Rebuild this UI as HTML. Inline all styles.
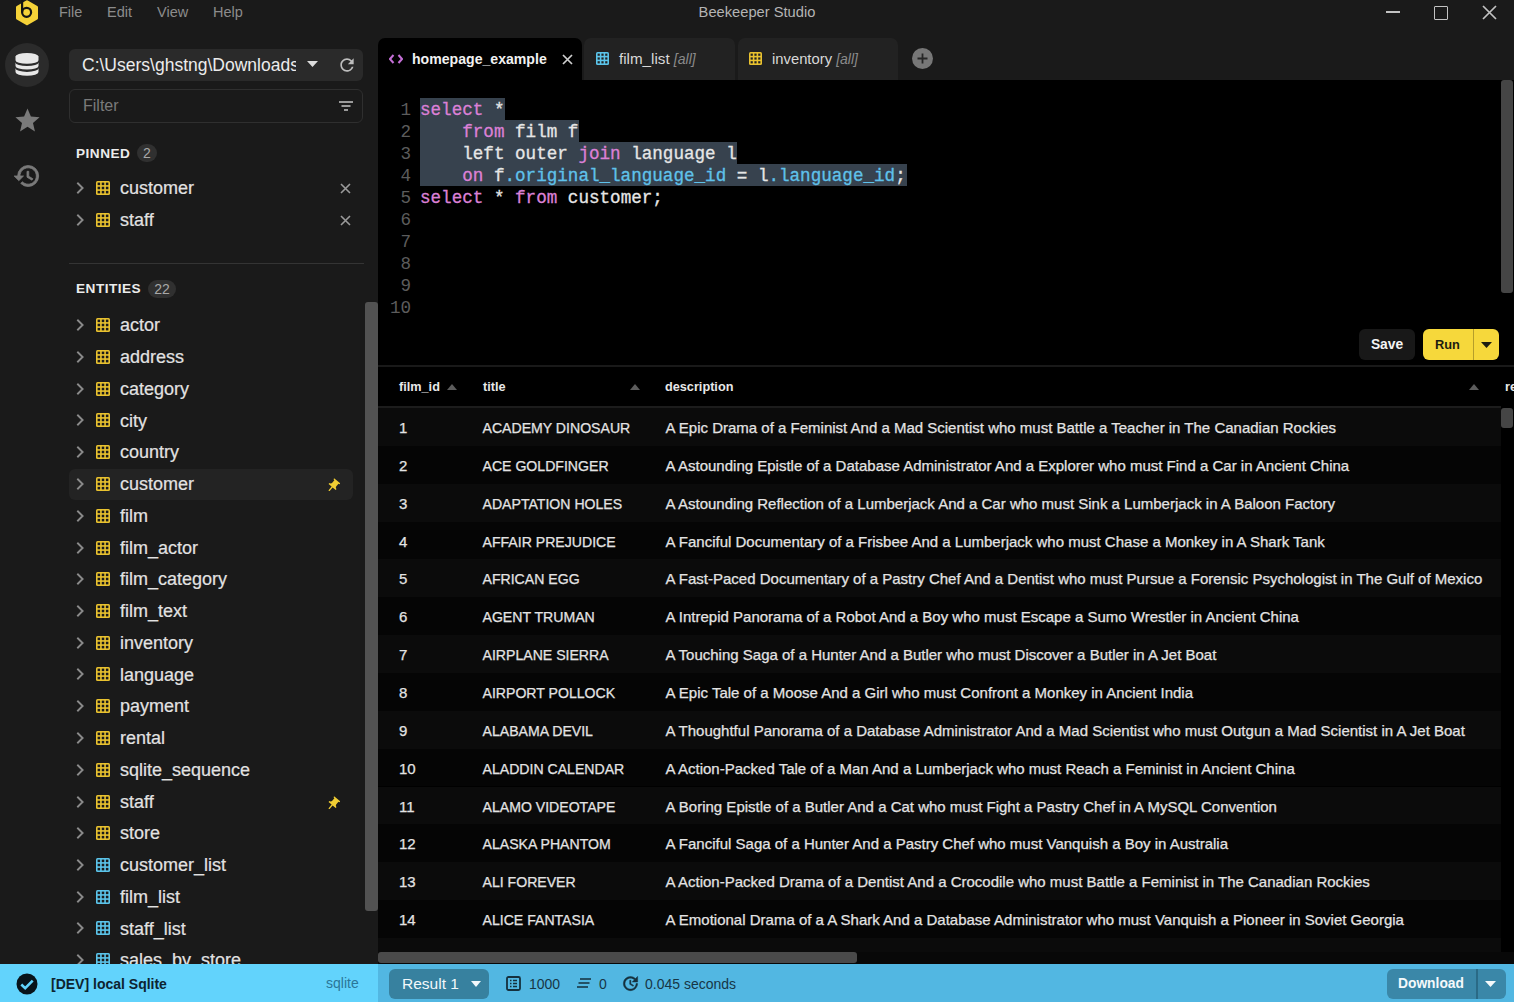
<!DOCTYPE html>
<html><head><meta charset="utf-8">
<style>
*{box-sizing:border-box;margin:0;padding:0}
html,body{width:1514px;height:1002px;overflow:hidden;background:#1a1a1a;font-family:"Liberation Sans",sans-serif;color:#ddd}
.abs{position:absolute}
.t{position:absolute;white-space:nowrap}
.menu{font-size:14.5px;color:#8c8c8c;line-height:20px;top:2px}
.item{font-size:18px;color:#e2e2e2;line-height:24px;-webkit-text-stroke:0.2px #e2e2e2}
.hdr{font-size:13.6px;font-weight:bold;color:#ececec;letter-spacing:0.5px;line-height:20px}
.badge{position:absolute;background:#303030;border-radius:9px;color:#a8a8a8;font-size:14px;text-align:center;line-height:18px;height:18px}
.code{font-family:"Liberation Mono",monospace;font-size:17.6px;line-height:22px;white-space:pre;color:#e6e6e6;-webkit-text-stroke:0.3px currentColor}
.ln{font-family:"Liberation Mono",monospace;font-size:17.6px;line-height:22px;color:#5c5c5c;text-align:right;width:30px}
.kw{color:#dc80d6}
.bl{color:#5fc1ea}
.sel{position:absolute;background:#37424e}
.cell{font-size:15px;color:#e3e3e3;line-height:20px;-webkit-text-stroke:0.25px #e3e3e3}
.th{font-size:12.7px;font-weight:bold;color:#e8e8e8;line-height:20px}
.tab{position:absolute;top:38px;height:42px;background:#222;border-radius:7px 7px 0 0}
.sb{font-size:14px;color:#173646;line-height:20px}
</style></head><body>

<svg class="abs" style="left:15px;top:0px" width="24" height="26" viewBox="0 0 24 26">
<path d="M12 1.8 L21.5 7.3 L21.5 18.3 L12 23.8 L2.5 18.3 L2.5 7.3 Z" fill="#f5d238" stroke="#f5d238" stroke-width="3" stroke-linejoin="round"/>
<path d="M7.1 0 L7.1 12.3" stroke="#141414" stroke-width="2.2"/>
<circle cx="11.6" cy="12.3" r="4.5" fill="none" stroke="#141414" stroke-width="2.2"/>
</svg>
<div class="t menu" style="left:59px">File</div>
<div class="t menu" style="left:107px">Edit</div>
<div class="t menu" style="left:157px">View</div>
<div class="t menu" style="left:213px">Help</div>
<div class="t" style="left:0;top:2px;width:1514px;text-align:center;font-size:14.7px;line-height:20px;color:#b4b4b4">Beekeeper Studio</div>
<div class="abs" style="left:1386px;top:11px;width:14px;height:2px;background:#c2c2c2"></div>
<div class="abs" style="left:1434px;top:6px;width:14px;height:14px;border:1.6px solid #c2c2c2;border-radius:1px"></div>
<svg class="abs" style="left:1482px;top:5px" width="15" height="15" viewBox="0 0 15 15"><path d="M1 1 L14 14 M14 1 L1 14" stroke="#c2c2c2" stroke-width="1.7"/></svg>
<div class="abs" style="left:5px;top:43px;width:44px;height:44px;border-radius:22px;background:#2b2b2b"></div>
<svg class="abs" style="left:15px;top:53px" width="24" height="23" viewBox="0 0 24 23">
<ellipse cx="12" cy="3.6" rx="11.5" ry="3.6" fill="#e8e8e8"/>
<path d="M0.5 3.6 L0.5 7.2 A11.5 3.6 0 0 0 23.5 7.2 L23.5 3.6 Z" fill="#e8e8e8"/>
<path d="M0.5 9.5 L0.5 13 A11.5 3.6 0 0 0 23.5 13 L23.5 9.5 A11.5 3.6 0 0 1 0.5 9.5 Z" fill="#e8e8e8"/>
<path d="M0.5 15.3 L0.5 19 A11.5 3.8 0 0 0 23.5 19 L23.5 15.3 A11.5 3.6 0 0 1 0.5 15.3 Z" fill="#e8e8e8"/>
</svg>
<svg class="abs" style="left:13px;top:106px" width="29" height="29" viewBox="0 0 24 24"><path d="M12 17.27L18.18 21l-1.64-7.03L22 9.24l-7.19-.61L12 2 9.19 8.63 2 9.24l5.46 4.73L5.82 21z" fill="#7a7a7a"/></svg>
<svg class="abs" style="left:13px;top:162px" width="28" height="28" viewBox="0 0 24 24"><path d="M13 3a9 9 0 0 0-9 9H1l3.89 3.89.07.14L9 12H6c0-3.87 3.13-7 7-7s7 3.13 7 7-3.13 7-7 7c-1.93 0-3.68-.79-4.94-2.06l-1.42 1.42A8.954 8.954 0 0 0 13 21a9 9 0 0 0 0-18zm-1 5v5l4.28 2.54.72-1.21-3.5-2.08V8H12z" fill="#7a7a7a" stroke="#7a7a7a" stroke-width="0.7"/></svg>
<div class="abs" style="left:69px;top:49px;width:294px;height:32px;background:#2a2a2a;border-radius:6px"></div>
<div class="t" style="left:82px;top:53px;width:214px;overflow:hidden;font-size:17.5px;line-height:24px;color:#ececec">C:\Users\ghstng\Downloads\</div>
<svg class="abs" style="left:307px;top:61px" width="11" height="6" viewBox="0 0 11 6"><path d="M0 0 L11 0 L5.5 6 Z" fill="#dcdcdc"/></svg>
<svg class="abs" style="left:337px;top:55px" width="20" height="20" viewBox="0 0 24 24"><path d="M17.65 6.35A7.958 7.958 0 0 0 12 4c-4.42 0-7.99 3.58-7.99 8s3.57 8 7.99 8c3.73 0 6.84-2.55 7.73-6h-2.08A5.99 5.99 0 0 1 12 18c-3.31 0-6-2.69-6-6s2.69-6 6-6c1.66 0 3.14.69 4.22 1.78L13 11h7V4l-2.35 2.35z" fill="#bdbdbd"/></svg>
<div class="abs" style="left:69px;top:89px;width:294px;height:34px;border:1px solid #2f2f2f;border-radius:6px;background:#1a1a1a"></div>
<div class="t" style="left:83px;top:96px;font-size:16px;line-height:20px;color:#7a7a7a">Filter</div>
<svg class="abs" style="left:338px;top:99px" width="16" height="14" viewBox="0 0 16 14"><path d="M1 3 H15 M3.5 7 H12.5 M6 11 H10" stroke="#9a9a9a" stroke-width="1.8"/></svg>
<div class="t hdr" style="left:76px;top:143.5px">PINNED</div>
<div class="badge" style="left:137px;top:144px;width:20px">2</div>
<svg class="abs" style="left:76px;top:182px" width="8" height="12" viewBox="0 0 8 12"><path d="M1.3 0.8 L6.6 6 L1.3 11.2" stroke="#8a8a8a" stroke-width="1.9" fill="none"/></svg>
<svg class="abs" style="left:96px;top:181px" width="14" height="14" viewBox="0 0 14 14"><rect x="0" y="0" width="14" height="14" rx="1.5" fill="#e9c22f"/><rect x="1.60" y="1.60" width="2.53" height="2.53" fill="#1a1a1a"/><rect x="1.60" y="5.73" width="2.53" height="2.53" fill="#1a1a1a"/><rect x="1.60" y="9.87" width="2.53" height="2.53" fill="#1a1a1a"/><rect x="5.73" y="1.60" width="2.53" height="2.53" fill="#1a1a1a"/><rect x="5.73" y="5.73" width="2.53" height="2.53" fill="#1a1a1a"/><rect x="5.73" y="9.87" width="2.53" height="2.53" fill="#1a1a1a"/><rect x="9.87" y="1.60" width="2.53" height="2.53" fill="#1a1a1a"/><rect x="9.87" y="5.73" width="2.53" height="2.53" fill="#1a1a1a"/><rect x="9.87" y="9.87" width="2.53" height="2.53" fill="#1a1a1a"/></svg>
<div class="t item" style="left:120px;top:176px">customer</div>
<svg class="abs" style="left:340px;top:183px" width="11" height="11" viewBox="0 0 11 11"><path d="M1 1 L10 10 M10 1 L1 10" stroke="#9a9a9a" stroke-width="1.6"/></svg>
<svg class="abs" style="left:76px;top:214px" width="8" height="12" viewBox="0 0 8 12"><path d="M1.3 0.8 L6.6 6 L1.3 11.2" stroke="#8a8a8a" stroke-width="1.9" fill="none"/></svg>
<svg class="abs" style="left:96px;top:213px" width="14" height="14" viewBox="0 0 14 14"><rect x="0" y="0" width="14" height="14" rx="1.5" fill="#e9c22f"/><rect x="1.60" y="1.60" width="2.53" height="2.53" fill="#1a1a1a"/><rect x="1.60" y="5.73" width="2.53" height="2.53" fill="#1a1a1a"/><rect x="1.60" y="9.87" width="2.53" height="2.53" fill="#1a1a1a"/><rect x="5.73" y="1.60" width="2.53" height="2.53" fill="#1a1a1a"/><rect x="5.73" y="5.73" width="2.53" height="2.53" fill="#1a1a1a"/><rect x="5.73" y="9.87" width="2.53" height="2.53" fill="#1a1a1a"/><rect x="9.87" y="1.60" width="2.53" height="2.53" fill="#1a1a1a"/><rect x="9.87" y="5.73" width="2.53" height="2.53" fill="#1a1a1a"/><rect x="9.87" y="9.87" width="2.53" height="2.53" fill="#1a1a1a"/></svg>
<div class="t item" style="left:120px;top:207.5px">staff</div>
<svg class="abs" style="left:340px;top:215px" width="11" height="11" viewBox="0 0 11 11"><path d="M1 1 L10 10 M10 1 L1 10" stroke="#9a9a9a" stroke-width="1.6"/></svg>
<div class="abs" style="left:69px;top:263px;width:295px;height:1px;background:#343434"></div>
<div class="t hdr" style="left:76px;top:279px">ENTITIES</div>
<div class="badge" style="left:148px;top:280px;width:28px">22</div>
<div class="abs" style="left:69px;top:469px;width:284px;height:31px;background:#232323;border-radius:6px"></div>
<svg class="abs" style="left:76px;top:319px" width="8" height="12" viewBox="0 0 8 12"><path d="M1.3 0.8 L6.6 6 L1.3 11.2" stroke="#8a8a8a" stroke-width="1.9" fill="none"/></svg>
<svg class="abs" style="left:96px;top:318px" width="14" height="14" viewBox="0 0 14 14"><rect x="0" y="0" width="14" height="14" rx="1.5" fill="#e9c22f"/><rect x="1.60" y="1.60" width="2.53" height="2.53" fill="#1a1a1a"/><rect x="1.60" y="5.73" width="2.53" height="2.53" fill="#1a1a1a"/><rect x="1.60" y="9.87" width="2.53" height="2.53" fill="#1a1a1a"/><rect x="5.73" y="1.60" width="2.53" height="2.53" fill="#1a1a1a"/><rect x="5.73" y="5.73" width="2.53" height="2.53" fill="#1a1a1a"/><rect x="5.73" y="9.87" width="2.53" height="2.53" fill="#1a1a1a"/><rect x="9.87" y="1.60" width="2.53" height="2.53" fill="#1a1a1a"/><rect x="9.87" y="5.73" width="2.53" height="2.53" fill="#1a1a1a"/><rect x="9.87" y="9.87" width="2.53" height="2.53" fill="#1a1a1a"/></svg>
<div class="t item" style="left:120px;top:313.25px">actor</div>
<svg class="abs" style="left:76px;top:351px" width="8" height="12" viewBox="0 0 8 12"><path d="M1.3 0.8 L6.6 6 L1.3 11.2" stroke="#8a8a8a" stroke-width="1.9" fill="none"/></svg>
<svg class="abs" style="left:96px;top:350px" width="14" height="14" viewBox="0 0 14 14"><rect x="0" y="0" width="14" height="14" rx="1.5" fill="#e9c22f"/><rect x="1.60" y="1.60" width="2.53" height="2.53" fill="#1a1a1a"/><rect x="1.60" y="5.73" width="2.53" height="2.53" fill="#1a1a1a"/><rect x="1.60" y="9.87" width="2.53" height="2.53" fill="#1a1a1a"/><rect x="5.73" y="1.60" width="2.53" height="2.53" fill="#1a1a1a"/><rect x="5.73" y="5.73" width="2.53" height="2.53" fill="#1a1a1a"/><rect x="5.73" y="9.87" width="2.53" height="2.53" fill="#1a1a1a"/><rect x="9.87" y="1.60" width="2.53" height="2.53" fill="#1a1a1a"/><rect x="9.87" y="5.73" width="2.53" height="2.53" fill="#1a1a1a"/><rect x="9.87" y="9.87" width="2.53" height="2.53" fill="#1a1a1a"/></svg>
<div class="t item" style="left:120px;top:345.00px">address</div>
<svg class="abs" style="left:76px;top:383px" width="8" height="12" viewBox="0 0 8 12"><path d="M1.3 0.8 L6.6 6 L1.3 11.2" stroke="#8a8a8a" stroke-width="1.9" fill="none"/></svg>
<svg class="abs" style="left:96px;top:382px" width="14" height="14" viewBox="0 0 14 14"><rect x="0" y="0" width="14" height="14" rx="1.5" fill="#e9c22f"/><rect x="1.60" y="1.60" width="2.53" height="2.53" fill="#1a1a1a"/><rect x="1.60" y="5.73" width="2.53" height="2.53" fill="#1a1a1a"/><rect x="1.60" y="9.87" width="2.53" height="2.53" fill="#1a1a1a"/><rect x="5.73" y="1.60" width="2.53" height="2.53" fill="#1a1a1a"/><rect x="5.73" y="5.73" width="2.53" height="2.53" fill="#1a1a1a"/><rect x="5.73" y="9.87" width="2.53" height="2.53" fill="#1a1a1a"/><rect x="9.87" y="1.60" width="2.53" height="2.53" fill="#1a1a1a"/><rect x="9.87" y="5.73" width="2.53" height="2.53" fill="#1a1a1a"/><rect x="9.87" y="9.87" width="2.53" height="2.53" fill="#1a1a1a"/></svg>
<div class="t item" style="left:120px;top:376.75px">category</div>
<svg class="abs" style="left:76px;top:414px" width="8" height="12" viewBox="0 0 8 12"><path d="M1.3 0.8 L6.6 6 L1.3 11.2" stroke="#8a8a8a" stroke-width="1.9" fill="none"/></svg>
<svg class="abs" style="left:96px;top:413px" width="14" height="14" viewBox="0 0 14 14"><rect x="0" y="0" width="14" height="14" rx="1.5" fill="#e9c22f"/><rect x="1.60" y="1.60" width="2.53" height="2.53" fill="#1a1a1a"/><rect x="1.60" y="5.73" width="2.53" height="2.53" fill="#1a1a1a"/><rect x="1.60" y="9.87" width="2.53" height="2.53" fill="#1a1a1a"/><rect x="5.73" y="1.60" width="2.53" height="2.53" fill="#1a1a1a"/><rect x="5.73" y="5.73" width="2.53" height="2.53" fill="#1a1a1a"/><rect x="5.73" y="9.87" width="2.53" height="2.53" fill="#1a1a1a"/><rect x="9.87" y="1.60" width="2.53" height="2.53" fill="#1a1a1a"/><rect x="9.87" y="5.73" width="2.53" height="2.53" fill="#1a1a1a"/><rect x="9.87" y="9.87" width="2.53" height="2.53" fill="#1a1a1a"/></svg>
<div class="t item" style="left:120px;top:408.50px">city</div>
<svg class="abs" style="left:76px;top:446px" width="8" height="12" viewBox="0 0 8 12"><path d="M1.3 0.8 L6.6 6 L1.3 11.2" stroke="#8a8a8a" stroke-width="1.9" fill="none"/></svg>
<svg class="abs" style="left:96px;top:445px" width="14" height="14" viewBox="0 0 14 14"><rect x="0" y="0" width="14" height="14" rx="1.5" fill="#e9c22f"/><rect x="1.60" y="1.60" width="2.53" height="2.53" fill="#1a1a1a"/><rect x="1.60" y="5.73" width="2.53" height="2.53" fill="#1a1a1a"/><rect x="1.60" y="9.87" width="2.53" height="2.53" fill="#1a1a1a"/><rect x="5.73" y="1.60" width="2.53" height="2.53" fill="#1a1a1a"/><rect x="5.73" y="5.73" width="2.53" height="2.53" fill="#1a1a1a"/><rect x="5.73" y="9.87" width="2.53" height="2.53" fill="#1a1a1a"/><rect x="9.87" y="1.60" width="2.53" height="2.53" fill="#1a1a1a"/><rect x="9.87" y="5.73" width="2.53" height="2.53" fill="#1a1a1a"/><rect x="9.87" y="9.87" width="2.53" height="2.53" fill="#1a1a1a"/></svg>
<div class="t item" style="left:120px;top:440.25px">country</div>
<svg class="abs" style="left:76px;top:478px" width="8" height="12" viewBox="0 0 8 12"><path d="M1.3 0.8 L6.6 6 L1.3 11.2" stroke="#8a8a8a" stroke-width="1.9" fill="none"/></svg>
<svg class="abs" style="left:96px;top:477px" width="14" height="14" viewBox="0 0 14 14"><rect x="0" y="0" width="14" height="14" rx="1.5" fill="#e9c22f"/><rect x="1.60" y="1.60" width="2.53" height="2.53" fill="#1a1a1a"/><rect x="1.60" y="5.73" width="2.53" height="2.53" fill="#1a1a1a"/><rect x="1.60" y="9.87" width="2.53" height="2.53" fill="#1a1a1a"/><rect x="5.73" y="1.60" width="2.53" height="2.53" fill="#1a1a1a"/><rect x="5.73" y="5.73" width="2.53" height="2.53" fill="#1a1a1a"/><rect x="5.73" y="9.87" width="2.53" height="2.53" fill="#1a1a1a"/><rect x="9.87" y="1.60" width="2.53" height="2.53" fill="#1a1a1a"/><rect x="9.87" y="5.73" width="2.53" height="2.53" fill="#1a1a1a"/><rect x="9.87" y="9.87" width="2.53" height="2.53" fill="#1a1a1a"/></svg>
<div class="t item" style="left:120px;top:472.00px">customer</div>
<svg class="abs" style="left:325px;top:477.5px" width="16" height="16" viewBox="0 0 24 24"><path d="M16 9V4h1c.55 0 1-.45 1-1s-.45-1-1-1H7c-.55 0-1 .45-1 1s.45 1 1 1h1v5c0 1.66-1.34 3-3 3v2h5.97v7l1 1 1-1v-7H19v-2c-1.66 0-3-1.34-3-3z" fill="#f0cd33" transform="rotate(40 12 12)"/></svg>
<svg class="abs" style="left:76px;top:510px" width="8" height="12" viewBox="0 0 8 12"><path d="M1.3 0.8 L6.6 6 L1.3 11.2" stroke="#8a8a8a" stroke-width="1.9" fill="none"/></svg>
<svg class="abs" style="left:96px;top:509px" width="14" height="14" viewBox="0 0 14 14"><rect x="0" y="0" width="14" height="14" rx="1.5" fill="#e9c22f"/><rect x="1.60" y="1.60" width="2.53" height="2.53" fill="#1a1a1a"/><rect x="1.60" y="5.73" width="2.53" height="2.53" fill="#1a1a1a"/><rect x="1.60" y="9.87" width="2.53" height="2.53" fill="#1a1a1a"/><rect x="5.73" y="1.60" width="2.53" height="2.53" fill="#1a1a1a"/><rect x="5.73" y="5.73" width="2.53" height="2.53" fill="#1a1a1a"/><rect x="5.73" y="9.87" width="2.53" height="2.53" fill="#1a1a1a"/><rect x="9.87" y="1.60" width="2.53" height="2.53" fill="#1a1a1a"/><rect x="9.87" y="5.73" width="2.53" height="2.53" fill="#1a1a1a"/><rect x="9.87" y="9.87" width="2.53" height="2.53" fill="#1a1a1a"/></svg>
<div class="t item" style="left:120px;top:503.75px">film</div>
<svg class="abs" style="left:76px;top:542px" width="8" height="12" viewBox="0 0 8 12"><path d="M1.3 0.8 L6.6 6 L1.3 11.2" stroke="#8a8a8a" stroke-width="1.9" fill="none"/></svg>
<svg class="abs" style="left:96px;top:541px" width="14" height="14" viewBox="0 0 14 14"><rect x="0" y="0" width="14" height="14" rx="1.5" fill="#e9c22f"/><rect x="1.60" y="1.60" width="2.53" height="2.53" fill="#1a1a1a"/><rect x="1.60" y="5.73" width="2.53" height="2.53" fill="#1a1a1a"/><rect x="1.60" y="9.87" width="2.53" height="2.53" fill="#1a1a1a"/><rect x="5.73" y="1.60" width="2.53" height="2.53" fill="#1a1a1a"/><rect x="5.73" y="5.73" width="2.53" height="2.53" fill="#1a1a1a"/><rect x="5.73" y="9.87" width="2.53" height="2.53" fill="#1a1a1a"/><rect x="9.87" y="1.60" width="2.53" height="2.53" fill="#1a1a1a"/><rect x="9.87" y="5.73" width="2.53" height="2.53" fill="#1a1a1a"/><rect x="9.87" y="9.87" width="2.53" height="2.53" fill="#1a1a1a"/></svg>
<div class="t item" style="left:120px;top:535.50px">film_actor</div>
<svg class="abs" style="left:76px;top:573px" width="8" height="12" viewBox="0 0 8 12"><path d="M1.3 0.8 L6.6 6 L1.3 11.2" stroke="#8a8a8a" stroke-width="1.9" fill="none"/></svg>
<svg class="abs" style="left:96px;top:572px" width="14" height="14" viewBox="0 0 14 14"><rect x="0" y="0" width="14" height="14" rx="1.5" fill="#e9c22f"/><rect x="1.60" y="1.60" width="2.53" height="2.53" fill="#1a1a1a"/><rect x="1.60" y="5.73" width="2.53" height="2.53" fill="#1a1a1a"/><rect x="1.60" y="9.87" width="2.53" height="2.53" fill="#1a1a1a"/><rect x="5.73" y="1.60" width="2.53" height="2.53" fill="#1a1a1a"/><rect x="5.73" y="5.73" width="2.53" height="2.53" fill="#1a1a1a"/><rect x="5.73" y="9.87" width="2.53" height="2.53" fill="#1a1a1a"/><rect x="9.87" y="1.60" width="2.53" height="2.53" fill="#1a1a1a"/><rect x="9.87" y="5.73" width="2.53" height="2.53" fill="#1a1a1a"/><rect x="9.87" y="9.87" width="2.53" height="2.53" fill="#1a1a1a"/></svg>
<div class="t item" style="left:120px;top:567.25px">film_category</div>
<svg class="abs" style="left:76px;top:605px" width="8" height="12" viewBox="0 0 8 12"><path d="M1.3 0.8 L6.6 6 L1.3 11.2" stroke="#8a8a8a" stroke-width="1.9" fill="none"/></svg>
<svg class="abs" style="left:96px;top:604px" width="14" height="14" viewBox="0 0 14 14"><rect x="0" y="0" width="14" height="14" rx="1.5" fill="#e9c22f"/><rect x="1.60" y="1.60" width="2.53" height="2.53" fill="#1a1a1a"/><rect x="1.60" y="5.73" width="2.53" height="2.53" fill="#1a1a1a"/><rect x="1.60" y="9.87" width="2.53" height="2.53" fill="#1a1a1a"/><rect x="5.73" y="1.60" width="2.53" height="2.53" fill="#1a1a1a"/><rect x="5.73" y="5.73" width="2.53" height="2.53" fill="#1a1a1a"/><rect x="5.73" y="9.87" width="2.53" height="2.53" fill="#1a1a1a"/><rect x="9.87" y="1.60" width="2.53" height="2.53" fill="#1a1a1a"/><rect x="9.87" y="5.73" width="2.53" height="2.53" fill="#1a1a1a"/><rect x="9.87" y="9.87" width="2.53" height="2.53" fill="#1a1a1a"/></svg>
<div class="t item" style="left:120px;top:599.00px">film_text</div>
<svg class="abs" style="left:76px;top:637px" width="8" height="12" viewBox="0 0 8 12"><path d="M1.3 0.8 L6.6 6 L1.3 11.2" stroke="#8a8a8a" stroke-width="1.9" fill="none"/></svg>
<svg class="abs" style="left:96px;top:636px" width="14" height="14" viewBox="0 0 14 14"><rect x="0" y="0" width="14" height="14" rx="1.5" fill="#e9c22f"/><rect x="1.60" y="1.60" width="2.53" height="2.53" fill="#1a1a1a"/><rect x="1.60" y="5.73" width="2.53" height="2.53" fill="#1a1a1a"/><rect x="1.60" y="9.87" width="2.53" height="2.53" fill="#1a1a1a"/><rect x="5.73" y="1.60" width="2.53" height="2.53" fill="#1a1a1a"/><rect x="5.73" y="5.73" width="2.53" height="2.53" fill="#1a1a1a"/><rect x="5.73" y="9.87" width="2.53" height="2.53" fill="#1a1a1a"/><rect x="9.87" y="1.60" width="2.53" height="2.53" fill="#1a1a1a"/><rect x="9.87" y="5.73" width="2.53" height="2.53" fill="#1a1a1a"/><rect x="9.87" y="9.87" width="2.53" height="2.53" fill="#1a1a1a"/></svg>
<div class="t item" style="left:120px;top:630.75px">inventory</div>
<svg class="abs" style="left:76px;top:668px" width="8" height="12" viewBox="0 0 8 12"><path d="M1.3 0.8 L6.6 6 L1.3 11.2" stroke="#8a8a8a" stroke-width="1.9" fill="none"/></svg>
<svg class="abs" style="left:96px;top:667px" width="14" height="14" viewBox="0 0 14 14"><rect x="0" y="0" width="14" height="14" rx="1.5" fill="#e9c22f"/><rect x="1.60" y="1.60" width="2.53" height="2.53" fill="#1a1a1a"/><rect x="1.60" y="5.73" width="2.53" height="2.53" fill="#1a1a1a"/><rect x="1.60" y="9.87" width="2.53" height="2.53" fill="#1a1a1a"/><rect x="5.73" y="1.60" width="2.53" height="2.53" fill="#1a1a1a"/><rect x="5.73" y="5.73" width="2.53" height="2.53" fill="#1a1a1a"/><rect x="5.73" y="9.87" width="2.53" height="2.53" fill="#1a1a1a"/><rect x="9.87" y="1.60" width="2.53" height="2.53" fill="#1a1a1a"/><rect x="9.87" y="5.73" width="2.53" height="2.53" fill="#1a1a1a"/><rect x="9.87" y="9.87" width="2.53" height="2.53" fill="#1a1a1a"/></svg>
<div class="t item" style="left:120px;top:662.50px">language</div>
<svg class="abs" style="left:76px;top:700px" width="8" height="12" viewBox="0 0 8 12"><path d="M1.3 0.8 L6.6 6 L1.3 11.2" stroke="#8a8a8a" stroke-width="1.9" fill="none"/></svg>
<svg class="abs" style="left:96px;top:699px" width="14" height="14" viewBox="0 0 14 14"><rect x="0" y="0" width="14" height="14" rx="1.5" fill="#e9c22f"/><rect x="1.60" y="1.60" width="2.53" height="2.53" fill="#1a1a1a"/><rect x="1.60" y="5.73" width="2.53" height="2.53" fill="#1a1a1a"/><rect x="1.60" y="9.87" width="2.53" height="2.53" fill="#1a1a1a"/><rect x="5.73" y="1.60" width="2.53" height="2.53" fill="#1a1a1a"/><rect x="5.73" y="5.73" width="2.53" height="2.53" fill="#1a1a1a"/><rect x="5.73" y="9.87" width="2.53" height="2.53" fill="#1a1a1a"/><rect x="9.87" y="1.60" width="2.53" height="2.53" fill="#1a1a1a"/><rect x="9.87" y="5.73" width="2.53" height="2.53" fill="#1a1a1a"/><rect x="9.87" y="9.87" width="2.53" height="2.53" fill="#1a1a1a"/></svg>
<div class="t item" style="left:120px;top:694.25px">payment</div>
<svg class="abs" style="left:76px;top:732px" width="8" height="12" viewBox="0 0 8 12"><path d="M1.3 0.8 L6.6 6 L1.3 11.2" stroke="#8a8a8a" stroke-width="1.9" fill="none"/></svg>
<svg class="abs" style="left:96px;top:731px" width="14" height="14" viewBox="0 0 14 14"><rect x="0" y="0" width="14" height="14" rx="1.5" fill="#e9c22f"/><rect x="1.60" y="1.60" width="2.53" height="2.53" fill="#1a1a1a"/><rect x="1.60" y="5.73" width="2.53" height="2.53" fill="#1a1a1a"/><rect x="1.60" y="9.87" width="2.53" height="2.53" fill="#1a1a1a"/><rect x="5.73" y="1.60" width="2.53" height="2.53" fill="#1a1a1a"/><rect x="5.73" y="5.73" width="2.53" height="2.53" fill="#1a1a1a"/><rect x="5.73" y="9.87" width="2.53" height="2.53" fill="#1a1a1a"/><rect x="9.87" y="1.60" width="2.53" height="2.53" fill="#1a1a1a"/><rect x="9.87" y="5.73" width="2.53" height="2.53" fill="#1a1a1a"/><rect x="9.87" y="9.87" width="2.53" height="2.53" fill="#1a1a1a"/></svg>
<div class="t item" style="left:120px;top:726.00px">rental</div>
<svg class="abs" style="left:76px;top:764px" width="8" height="12" viewBox="0 0 8 12"><path d="M1.3 0.8 L6.6 6 L1.3 11.2" stroke="#8a8a8a" stroke-width="1.9" fill="none"/></svg>
<svg class="abs" style="left:96px;top:763px" width="14" height="14" viewBox="0 0 14 14"><rect x="0" y="0" width="14" height="14" rx="1.5" fill="#e9c22f"/><rect x="1.60" y="1.60" width="2.53" height="2.53" fill="#1a1a1a"/><rect x="1.60" y="5.73" width="2.53" height="2.53" fill="#1a1a1a"/><rect x="1.60" y="9.87" width="2.53" height="2.53" fill="#1a1a1a"/><rect x="5.73" y="1.60" width="2.53" height="2.53" fill="#1a1a1a"/><rect x="5.73" y="5.73" width="2.53" height="2.53" fill="#1a1a1a"/><rect x="5.73" y="9.87" width="2.53" height="2.53" fill="#1a1a1a"/><rect x="9.87" y="1.60" width="2.53" height="2.53" fill="#1a1a1a"/><rect x="9.87" y="5.73" width="2.53" height="2.53" fill="#1a1a1a"/><rect x="9.87" y="9.87" width="2.53" height="2.53" fill="#1a1a1a"/></svg>
<div class="t item" style="left:120px;top:757.75px">sqlite_sequence</div>
<svg class="abs" style="left:76px;top:796px" width="8" height="12" viewBox="0 0 8 12"><path d="M1.3 0.8 L6.6 6 L1.3 11.2" stroke="#8a8a8a" stroke-width="1.9" fill="none"/></svg>
<svg class="abs" style="left:96px;top:795px" width="14" height="14" viewBox="0 0 14 14"><rect x="0" y="0" width="14" height="14" rx="1.5" fill="#e9c22f"/><rect x="1.60" y="1.60" width="2.53" height="2.53" fill="#1a1a1a"/><rect x="1.60" y="5.73" width="2.53" height="2.53" fill="#1a1a1a"/><rect x="1.60" y="9.87" width="2.53" height="2.53" fill="#1a1a1a"/><rect x="5.73" y="1.60" width="2.53" height="2.53" fill="#1a1a1a"/><rect x="5.73" y="5.73" width="2.53" height="2.53" fill="#1a1a1a"/><rect x="5.73" y="9.87" width="2.53" height="2.53" fill="#1a1a1a"/><rect x="9.87" y="1.60" width="2.53" height="2.53" fill="#1a1a1a"/><rect x="9.87" y="5.73" width="2.53" height="2.53" fill="#1a1a1a"/><rect x="9.87" y="9.87" width="2.53" height="2.53" fill="#1a1a1a"/></svg>
<div class="t item" style="left:120px;top:789.50px">staff</div>
<svg class="abs" style="left:325px;top:795.5px" width="16" height="16" viewBox="0 0 24 24"><path d="M16 9V4h1c.55 0 1-.45 1-1s-.45-1-1-1H7c-.55 0-1 .45-1 1s.45 1 1 1h1v5c0 1.66-1.34 3-3 3v2h5.97v7l1 1 1-1v-7H19v-2c-1.66 0-3-1.34-3-3z" fill="#f0cd33" transform="rotate(40 12 12)"/></svg>
<svg class="abs" style="left:76px;top:827px" width="8" height="12" viewBox="0 0 8 12"><path d="M1.3 0.8 L6.6 6 L1.3 11.2" stroke="#8a8a8a" stroke-width="1.9" fill="none"/></svg>
<svg class="abs" style="left:96px;top:826px" width="14" height="14" viewBox="0 0 14 14"><rect x="0" y="0" width="14" height="14" rx="1.5" fill="#e9c22f"/><rect x="1.60" y="1.60" width="2.53" height="2.53" fill="#1a1a1a"/><rect x="1.60" y="5.73" width="2.53" height="2.53" fill="#1a1a1a"/><rect x="1.60" y="9.87" width="2.53" height="2.53" fill="#1a1a1a"/><rect x="5.73" y="1.60" width="2.53" height="2.53" fill="#1a1a1a"/><rect x="5.73" y="5.73" width="2.53" height="2.53" fill="#1a1a1a"/><rect x="5.73" y="9.87" width="2.53" height="2.53" fill="#1a1a1a"/><rect x="9.87" y="1.60" width="2.53" height="2.53" fill="#1a1a1a"/><rect x="9.87" y="5.73" width="2.53" height="2.53" fill="#1a1a1a"/><rect x="9.87" y="9.87" width="2.53" height="2.53" fill="#1a1a1a"/></svg>
<div class="t item" style="left:120px;top:821.25px">store</div>
<svg class="abs" style="left:76px;top:859px" width="8" height="12" viewBox="0 0 8 12"><path d="M1.3 0.8 L6.6 6 L1.3 11.2" stroke="#8a8a8a" stroke-width="1.9" fill="none"/></svg>
<svg class="abs" style="left:96px;top:858px" width="14" height="14" viewBox="0 0 14 14"><rect x="0" y="0" width="14" height="14" rx="1.5" fill="#5bc4ea"/><rect x="1.60" y="1.60" width="2.53" height="2.53" fill="#1a1a1a"/><rect x="1.60" y="5.73" width="2.53" height="2.53" fill="#1a1a1a"/><rect x="1.60" y="9.87" width="2.53" height="2.53" fill="#1a1a1a"/><rect x="5.73" y="1.60" width="2.53" height="2.53" fill="#1a1a1a"/><rect x="5.73" y="5.73" width="2.53" height="2.53" fill="#1a1a1a"/><rect x="5.73" y="9.87" width="2.53" height="2.53" fill="#1a1a1a"/><rect x="9.87" y="1.60" width="2.53" height="2.53" fill="#1a1a1a"/><rect x="9.87" y="5.73" width="2.53" height="2.53" fill="#1a1a1a"/><rect x="9.87" y="9.87" width="2.53" height="2.53" fill="#1a1a1a"/></svg>
<div class="t item" style="left:120px;top:853.00px">customer_list</div>
<svg class="abs" style="left:76px;top:891px" width="8" height="12" viewBox="0 0 8 12"><path d="M1.3 0.8 L6.6 6 L1.3 11.2" stroke="#8a8a8a" stroke-width="1.9" fill="none"/></svg>
<svg class="abs" style="left:96px;top:890px" width="14" height="14" viewBox="0 0 14 14"><rect x="0" y="0" width="14" height="14" rx="1.5" fill="#5bc4ea"/><rect x="1.60" y="1.60" width="2.53" height="2.53" fill="#1a1a1a"/><rect x="1.60" y="5.73" width="2.53" height="2.53" fill="#1a1a1a"/><rect x="1.60" y="9.87" width="2.53" height="2.53" fill="#1a1a1a"/><rect x="5.73" y="1.60" width="2.53" height="2.53" fill="#1a1a1a"/><rect x="5.73" y="5.73" width="2.53" height="2.53" fill="#1a1a1a"/><rect x="5.73" y="9.87" width="2.53" height="2.53" fill="#1a1a1a"/><rect x="9.87" y="1.60" width="2.53" height="2.53" fill="#1a1a1a"/><rect x="9.87" y="5.73" width="2.53" height="2.53" fill="#1a1a1a"/><rect x="9.87" y="9.87" width="2.53" height="2.53" fill="#1a1a1a"/></svg>
<div class="t item" style="left:120px;top:884.75px">film_list</div>
<svg class="abs" style="left:76px;top:922px" width="8" height="12" viewBox="0 0 8 12"><path d="M1.3 0.8 L6.6 6 L1.3 11.2" stroke="#8a8a8a" stroke-width="1.9" fill="none"/></svg>
<svg class="abs" style="left:96px;top:921px" width="14" height="14" viewBox="0 0 14 14"><rect x="0" y="0" width="14" height="14" rx="1.5" fill="#5bc4ea"/><rect x="1.60" y="1.60" width="2.53" height="2.53" fill="#1a1a1a"/><rect x="1.60" y="5.73" width="2.53" height="2.53" fill="#1a1a1a"/><rect x="1.60" y="9.87" width="2.53" height="2.53" fill="#1a1a1a"/><rect x="5.73" y="1.60" width="2.53" height="2.53" fill="#1a1a1a"/><rect x="5.73" y="5.73" width="2.53" height="2.53" fill="#1a1a1a"/><rect x="5.73" y="9.87" width="2.53" height="2.53" fill="#1a1a1a"/><rect x="9.87" y="1.60" width="2.53" height="2.53" fill="#1a1a1a"/><rect x="9.87" y="5.73" width="2.53" height="2.53" fill="#1a1a1a"/><rect x="9.87" y="9.87" width="2.53" height="2.53" fill="#1a1a1a"/></svg>
<div class="t item" style="left:120px;top:916.50px">staff_list</div>
<svg class="abs" style="left:76px;top:954px" width="8" height="12" viewBox="0 0 8 12"><path d="M1.3 0.8 L6.6 6 L1.3 11.2" stroke="#8a8a8a" stroke-width="1.9" fill="none"/></svg>
<svg class="abs" style="left:96px;top:953px" width="14" height="14" viewBox="0 0 14 14"><rect x="0" y="0" width="14" height="14" rx="1.5" fill="#5bc4ea"/><rect x="1.60" y="1.60" width="2.53" height="2.53" fill="#1a1a1a"/><rect x="1.60" y="5.73" width="2.53" height="2.53" fill="#1a1a1a"/><rect x="1.60" y="9.87" width="2.53" height="2.53" fill="#1a1a1a"/><rect x="5.73" y="1.60" width="2.53" height="2.53" fill="#1a1a1a"/><rect x="5.73" y="5.73" width="2.53" height="2.53" fill="#1a1a1a"/><rect x="5.73" y="9.87" width="2.53" height="2.53" fill="#1a1a1a"/><rect x="9.87" y="1.60" width="2.53" height="2.53" fill="#1a1a1a"/><rect x="9.87" y="5.73" width="2.53" height="2.53" fill="#1a1a1a"/><rect x="9.87" y="9.87" width="2.53" height="2.53" fill="#1a1a1a"/></svg>
<div class="t item" style="left:120px;top:948.25px">sales_by_store</div>
<div class="abs" style="left:365px;top:302px;width:13px;height:609px;background:#525252;border-radius:3px"></div>
<div class="abs" style="left:378px;top:38px;width:204px;height:42px;background:#000;border-radius:7px 7px 0 0"></div>
<svg class="abs" style="left:389px;top:54px" width="14" height="10" viewBox="0 0 14 10"><path d="M4.5 1 L1 5 L4.5 9 M9.5 1 L13 5 L9.5 9" stroke="#c46fd6" stroke-width="2" fill="none"/></svg>
<div class="t" style="left:412px;top:49px;font-size:14.1px;font-weight:bold;line-height:20px;color:#f2f2f2">homepage_example</div>
<svg class="abs" style="left:562px;top:54px" width="11" height="11" viewBox="0 0 11 11"><path d="M1 1 L10 10 M10 1 L1 10" stroke="#cfcfcf" stroke-width="1.7"/></svg>
<div class="tab" style="left:584px;width:151px"></div>
<svg class="abs" style="left:596px;top:52px" width="13" height="13" viewBox="0 0 13 13"><rect x="0" y="0" width="13" height="13" rx="1.5" fill="#5bc4ea"/><rect x="1.60" y="1.60" width="2.20" height="2.20" fill="#222"/><rect x="1.60" y="5.40" width="2.20" height="2.20" fill="#222"/><rect x="1.60" y="9.20" width="2.20" height="2.20" fill="#222"/><rect x="5.40" y="1.60" width="2.20" height="2.20" fill="#222"/><rect x="5.40" y="5.40" width="2.20" height="2.20" fill="#222"/><rect x="5.40" y="9.20" width="2.20" height="2.20" fill="#222"/><rect x="9.20" y="1.60" width="2.20" height="2.20" fill="#222"/><rect x="9.20" y="5.40" width="2.20" height="2.20" fill="#222"/><rect x="9.20" y="9.20" width="2.20" height="2.20" fill="#222"/></svg>
<div class="t" style="left:619px;top:49px;font-size:15.2px;line-height:20px;color:#d8d8d8">film_list <i style="color:#8a8a8a;font-size:14px">[all]</i></div>
<div class="tab" style="left:738px;width:160px"></div>
<svg class="abs" style="left:749px;top:52px" width="13" height="13" viewBox="0 0 13 13"><rect x="0" y="0" width="13" height="13" rx="1.5" fill="#e9c22f"/><rect x="1.60" y="1.60" width="2.20" height="2.20" fill="#222"/><rect x="1.60" y="5.40" width="2.20" height="2.20" fill="#222"/><rect x="1.60" y="9.20" width="2.20" height="2.20" fill="#222"/><rect x="5.40" y="1.60" width="2.20" height="2.20" fill="#222"/><rect x="5.40" y="5.40" width="2.20" height="2.20" fill="#222"/><rect x="5.40" y="9.20" width="2.20" height="2.20" fill="#222"/><rect x="9.20" y="1.60" width="2.20" height="2.20" fill="#222"/><rect x="9.20" y="5.40" width="2.20" height="2.20" fill="#222"/><rect x="9.20" y="9.20" width="2.20" height="2.20" fill="#222"/></svg>
<div class="t" style="left:772px;top:49px;font-size:14.8px;line-height:20px;color:#d8d8d8">inventory <i style="color:#8a8a8a;font-size:14px">[all]</i></div>
<div class="abs" style="left:912px;top:48px;width:21px;height:21px;border-radius:11px;background:#777"></div>
<svg class="abs" style="left:916px;top:52px" width="13" height="13" viewBox="0 0 13 13"><path d="M6.5 1.5 V11.5 M1.5 6.5 H11.5" stroke="#262626" stroke-width="1.8"/></svg>
<div class="abs" style="left:378px;top:80px;width:1136px;height:884px;background:#000"></div>
<div class="abs" style="left:1501px;top:80px;width:12px;height:213px;background:#454545;border-radius:3px"></div>
<div class="sel" style="left:420px;top:98px;width:85.0px;height:22px"></div>
<div class="sel" style="left:420px;top:120px;width:159.0px;height:22px"></div>
<div class="sel" style="left:420px;top:142px;width:317.4px;height:22px"></div>
<div class="sel" style="left:420px;top:164px;width:486.5px;height:22px"></div>
<div class="t ln" style="left:381px;top:98.7px">1</div>
<div class="t ln" style="left:381px;top:120.7px">2</div>
<div class="t ln" style="left:381px;top:142.7px">3</div>
<div class="t ln" style="left:381px;top:164.7px">4</div>
<div class="t ln" style="left:381px;top:186.7px">5</div>
<div class="t ln" style="left:381px;top:208.7px">6</div>
<div class="t ln" style="left:381px;top:230.7px">7</div>
<div class="t ln" style="left:381px;top:252.7px">8</div>
<div class="t ln" style="left:381px;top:274.7px">9</div>
<div class="t ln" style="left:381px;top:296.7px">10</div>
<div class="t code" style="left:420px;top:99.2px"><span class="kw">select</span> *</div>
<div class="t code" style="left:420px;top:121.2px">    <span class="kw">from</span> film f</div>
<div class="t code" style="left:420px;top:143.2px">    left outer <span class="kw">join</span> language l</div>
<div class="t code" style="left:420px;top:165.2px">    <span class="kw">on</span> f<span class="bl">.original_language_id</span> = l<span class="bl">.language_id</span>;</div>
<div class="t code" style="left:420px;top:187.2px"><span class="kw">select</span> * <span class="kw">from</span> customer;</div>
<div class="abs" style="left:1359px;top:329px;width:56px;height:31px;background:#181818;border-radius:6px"></div>
<div class="t" style="left:1359px;top:335px;width:56px;text-align:center;font-size:13.8px;font-weight:bold;line-height:20px;color:#f4f4f4">Save</div>
<div class="abs" style="left:1423px;top:329px;width:76px;height:31px;background:#f6d83b;border-radius:6px"></div>
<div class="abs" style="left:1473px;top:329px;width:1px;height:31px;background:#b59e2a"></div>
<div class="t" style="left:1435px;top:335px;font-size:12.8px;font-weight:bold;line-height:20px;color:#1d1d10">Run</div>
<svg class="abs" style="left:1481px;top:342px" width="11" height="6" viewBox="0 0 11 6"><path d="M0 0 L11 0 L5.5 6 Z" fill="#1d1d10"/></svg>
<div class="abs" style="left:378px;top:365px;width:1136px;height:2px;background:#191919"></div>
<div class="abs" style="left:378px;top:367px;width:1123px;height:39px;background:#000"></div>
<div class="abs" style="left:378px;top:406px;width:1123px;height:2px;background:#1c1c1c"></div>
<div class="t th" style="left:399px;top:377px">film_id</div>
<svg class="abs" style="left:446.5px;top:384px" width="10" height="6" viewBox="0 0 10 6"><path d="M0 6 L10 6 L5 0 Z" fill="#5c5c5c"/></svg>
<div class="t th" style="left:483px;top:377px">title</div>
<svg class="abs" style="left:629.5px;top:384px" width="10" height="6" viewBox="0 0 10 6"><path d="M0 6 L10 6 L5 0 Z" fill="#5c5c5c"/></svg>
<div class="t th" style="left:665px;top:377px">description</div>
<svg class="abs" style="left:1469px;top:384px" width="10" height="6" viewBox="0 0 10 6"><path d="M0 6 L10 6 L5 0 Z" fill="#5c5c5c"/></svg>
<div class="t th" style="left:1505px;top:377px">re</div>
<div class="abs" style="left:378px;top:408px;width:1123px;height:544px;overflow:hidden">
<div class="abs" style="left:0;top:0.00px;width:1123px;height:37.85px;background:#0b0b0b"></div>
<div class="t cell" style="left:21px;top:10.00px">1</div>
<div class="t cell" style="left:104.5px;top:10.00px;font-size:14.1px">ACADEMY DINOSAUR</div>
<div class="t cell" style="left:287.5px;top:10.00px">A Epic Drama of a Feminist And a Mad Scientist who must Battle a Teacher in The Canadian Rockies</div>
<div class="abs" style="left:0;top:37.85px;width:1123px;height:37.85px;background:#050505"></div>
<div class="t cell" style="left:21px;top:47.85px">2</div>
<div class="t cell" style="left:104.5px;top:47.85px;font-size:14.1px">ACE GOLDFINGER</div>
<div class="t cell" style="left:287.5px;top:47.85px">A Astounding Epistle of a Database Administrator And a Explorer who must Find a Car in Ancient China</div>
<div class="abs" style="left:0;top:75.70px;width:1123px;height:37.85px;background:#0b0b0b"></div>
<div class="t cell" style="left:21px;top:85.70px">3</div>
<div class="t cell" style="left:104.5px;top:85.70px;font-size:14.1px">ADAPTATION HOLES</div>
<div class="t cell" style="left:287.5px;top:85.70px">A Astounding Reflection of a Lumberjack And a Car who must Sink a Lumberjack in A Baloon Factory</div>
<div class="abs" style="left:0;top:113.55px;width:1123px;height:37.85px;background:#050505"></div>
<div class="t cell" style="left:21px;top:123.55px">4</div>
<div class="t cell" style="left:104.5px;top:123.55px;font-size:14.1px">AFFAIR PREJUDICE</div>
<div class="t cell" style="left:287.5px;top:123.55px">A Fanciful Documentary of a Frisbee And a Lumberjack who must Chase a Monkey in A Shark Tank</div>
<div class="abs" style="left:0;top:151.40px;width:1123px;height:37.85px;background:#0b0b0b"></div>
<div class="t cell" style="left:21px;top:161.40px">5</div>
<div class="t cell" style="left:104.5px;top:161.40px;font-size:14.1px">AFRICAN EGG</div>
<div class="t cell" style="left:287.5px;top:161.40px">A Fast-Paced Documentary of a Pastry Chef And a Dentist who must Pursue a Forensic Psychologist in The Gulf of Mexico</div>
<div class="abs" style="left:0;top:189.25px;width:1123px;height:37.85px;background:#050505"></div>
<div class="t cell" style="left:21px;top:199.25px">6</div>
<div class="t cell" style="left:104.5px;top:199.25px;font-size:14.1px">AGENT TRUMAN</div>
<div class="t cell" style="left:287.5px;top:199.25px">A Intrepid Panorama of a Robot And a Boy who must Escape a Sumo Wrestler in Ancient China</div>
<div class="abs" style="left:0;top:227.10px;width:1123px;height:37.85px;background:#0b0b0b"></div>
<div class="t cell" style="left:21px;top:237.10px">7</div>
<div class="t cell" style="left:104.5px;top:237.10px;font-size:14.1px">AIRPLANE SIERRA</div>
<div class="t cell" style="left:287.5px;top:237.10px">A Touching Saga of a Hunter And a Butler who must Discover a Butler in A Jet Boat</div>
<div class="abs" style="left:0;top:264.95px;width:1123px;height:37.85px;background:#050505"></div>
<div class="t cell" style="left:21px;top:274.95px">8</div>
<div class="t cell" style="left:104.5px;top:274.95px;font-size:14.1px">AIRPORT POLLOCK</div>
<div class="t cell" style="left:287.5px;top:274.95px">A Epic Tale of a Moose And a Girl who must Confront a Monkey in Ancient India</div>
<div class="abs" style="left:0;top:302.80px;width:1123px;height:37.85px;background:#0b0b0b"></div>
<div class="t cell" style="left:21px;top:312.80px">9</div>
<div class="t cell" style="left:104.5px;top:312.80px;font-size:14.1px">ALABAMA DEVIL</div>
<div class="t cell" style="left:287.5px;top:312.80px">A Thoughtful Panorama of a Database Administrator And a Mad Scientist who must Outgun a Mad Scientist in A Jet Boat</div>
<div class="abs" style="left:0;top:340.65px;width:1123px;height:37.85px;background:#050505"></div>
<div class="t cell" style="left:21px;top:350.65px">10</div>
<div class="t cell" style="left:104.5px;top:350.65px;font-size:14.1px">ALADDIN CALENDAR</div>
<div class="t cell" style="left:287.5px;top:350.65px">A Action-Packed Tale of a Man And a Lumberjack who must Reach a Feminist in Ancient China</div>
<div class="abs" style="left:0;top:378.50px;width:1123px;height:37.85px;background:#0b0b0b"></div>
<div class="t cell" style="left:21px;top:388.50px">11</div>
<div class="t cell" style="left:104.5px;top:388.50px;font-size:14.1px">ALAMO VIDEOTAPE</div>
<div class="t cell" style="left:287.5px;top:388.50px">A Boring Epistle of a Butler And a Cat who must Fight a Pastry Chef in A MySQL Convention</div>
<div class="abs" style="left:0;top:416.35px;width:1123px;height:37.85px;background:#050505"></div>
<div class="t cell" style="left:21px;top:426.35px">12</div>
<div class="t cell" style="left:104.5px;top:426.35px;font-size:14.1px">ALASKA PHANTOM</div>
<div class="t cell" style="left:287.5px;top:426.35px">A Fanciful Saga of a Hunter And a Pastry Chef who must Vanquish a Boy in Australia</div>
<div class="abs" style="left:0;top:454.20px;width:1123px;height:37.85px;background:#0b0b0b"></div>
<div class="t cell" style="left:21px;top:464.20px">13</div>
<div class="t cell" style="left:104.5px;top:464.20px;font-size:14.1px">ALI FOREVER</div>
<div class="t cell" style="left:287.5px;top:464.20px">A Action-Packed Drama of a Dentist And a Crocodile who must Battle a Feminist in The Canadian Rockies</div>
<div class="abs" style="left:0;top:492.05px;width:1123px;height:37.85px;background:#050505"></div>
<div class="t cell" style="left:21px;top:502.05px">14</div>
<div class="t cell" style="left:104.5px;top:502.05px;font-size:14.1px">ALICE FANTASIA</div>
<div class="t cell" style="left:287.5px;top:502.05px">A Emotional Drama of a A Shark And a Database Administrator who must Vanquish a Pioneer in Soviet Georgia</div>
<div class="abs" style="left:0;top:529.90px;width:1123px;height:37.85px;background:#0b0b0b"></div>
<div class="t cell" style="left:21px;top:539.90px">15</div>
<div class="t cell" style="left:104.5px;top:539.90px;font-size:14.1px">ALIEN CENTER</div>
<div class="t cell" style="left:287.5px;top:539.90px">A Brilliant Drama of a Cat And a Mad Scientist who must Battle a Feminist in A MySQL Convention</div>
</div>
<div class="abs" style="left:1501px;top:408px;width:12px;height:20px;background:#454545;border-radius:3px"></div>
<div class="abs" style="left:378px;top:952px;width:1136px;height:12px;background:#080808"></div>
<div class="abs" style="left:378px;top:952px;width:479px;height:11px;background:#4a4a4a;border-radius:3px"></div>
<div class="abs" style="left:0;top:964px;width:1514px;height:38px;background:#52b7e2"></div>
<div class="abs" style="left:0;top:964px;width:378px;height:38px;background:#62d3fc"></div>
<svg class="abs" style="left:16px;top:973px" width="22" height="22" viewBox="0 0 22 22"><circle cx="11" cy="11" r="10.5" fill="#08131a"/><path d="M5.3 11.5 L9.2 15.2 L16.7 7.6" stroke="#62d3fc" stroke-width="2.6" fill="none"/></svg>
<div class="t" style="left:51px;top:974px;font-size:14px;font-weight:bold;line-height:20px;color:#0d2430">[DEV] local Sqlite</div>
<div class="t" style="left:326px;top:973px;font-size:14px;line-height:20px;color:#2a7698">sqlite</div>
<div class="abs" style="left:389px;top:969px;width:100px;height:30px;background:#37819f;border-radius:6px"></div>
<div class="t" style="left:402px;top:974px;font-size:15.5px;line-height:20px;color:#f2f8fb">Result 1</div>
<svg class="abs" style="left:471px;top:981px" width="10" height="6" viewBox="0 0 10 6"><path d="M0 0 L10 0 L5 6 Z" fill="#f2f8fb"/></svg>
<svg class="abs" style="left:506px;top:976px" width="15" height="15" viewBox="0 0 15 15"><rect x="1" y="1" width="13" height="13" rx="1.5" fill="none" stroke="#15303d" stroke-width="1.8"/><path d="M4 4.5 H5.5 M7 4.5 H11 M4 7.5 H5.5 M7 7.5 H11 M4 10.5 H5.5 M7 10.5 H11" stroke="#15303d" stroke-width="1.5"/></svg>
<div class="t sb" style="left:529px;top:974px">1000</div>
<svg class="abs" style="left:577px;top:977px" width="15" height="12" viewBox="0 0 15 12"><path d="M3 2 H14 M1.5 6 H12.5 M0 10 H11" stroke="#15303d" stroke-width="1.6"/></svg>
<div class="t sb" style="left:599px;top:974px">0</div>
<svg class="abs" style="left:621px;top:974px" width="19" height="19" viewBox="0 0 24 24"><path d="M21 10.12h-6.78l2.74-2.82c-2.73-2.7-7.15-2.8-9.88-.1-2.73 2.71-2.73 7.08 0 9.79s7.15 2.71 9.88 0C18.32 15.65 19 14.08 19 12.1h2c0 1.98-.88 4.55-2.64 6.29-3.51 3.48-9.21 3.480-12.72 0-3.5-3.47-3.53-9.11-.02-12.58s9.14-3.47 12.65 0L21 3v7.12zM12.5 8v4.25l3.5 2.08-.72 1.21L11 13V8h1.5z" fill="#15303d" stroke="#15303d" stroke-width="0.6"/></svg>
<div class="t sb" style="left:645px;top:974px">0.045 seconds</div>
<div class="abs" style="left:1387px;top:969px;width:119px;height:30px;background:#3a87a8;border-radius:6px"></div>
<div class="abs" style="left:1476px;top:969px;width:1.5px;height:30px;background:#2a6a86"></div>
<div class="t" style="left:1398px;top:974px;font-size:13.8px;font-weight:bold;line-height:20px;color:#f4f9fb">Download</div>
<svg class="abs" style="left:1485px;top:981px" width="11" height="6" viewBox="0 0 11 6"><path d="M0 0 L11 0 L5.5 6 Z" fill="#f4f9fb"/></svg>
</body></html>
